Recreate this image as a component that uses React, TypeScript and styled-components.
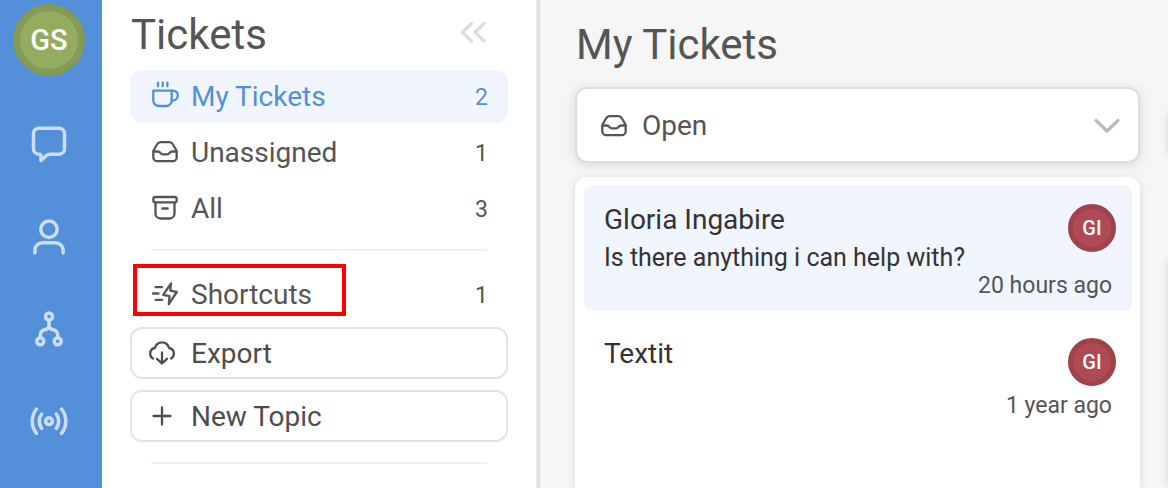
import React from "react";
import styled, { createGlobalStyle } from "styled-components";

const GlobalStyle = createGlobalStyle`
  *, *::before, *::after { box-sizing: border-box; }
  body {
    margin: 0;
    font-family: Roboto, "Liberation Sans", sans-serif;
    color: #555;
    background: #f6f6f6;
  }
  h1, h2, p, ul { margin: 0; padding: 0; font-weight: 400; }
  ul { list-style: none; }
  a { color: inherit; text-decoration: none; }
  button, select { font: inherit; color: inherit; cursor: pointer; }
`;

const Page = styled.div`
  display: flex;
  height: 100vh;
  overflow: hidden;
`;

const Rail = styled.nav`
  flex: 0 0 102px;
  display: flex;
  flex-direction: column;
  align-items: center;
  gap: 52px;
  padding: 4px 4px 0 0;
  background: #5390d9;
  color: #cbdef4;
`;

const RailLink = styled.a`
  display: block;
  width: 40px;
  height: 40px;
`;

const Avatar = styled.div<{ $large?: boolean }>`
  flex: none;
  display: flex;
  align-items: center;
  justify-content: center;
  width: ${(p) => (p.$large ? 72 : 48)}px;
  height: ${(p) => (p.$large ? 72 : 48)}px;
  margin-bottom: ${(p) => (p.$large ? -3 : 0)}px;
  border: ${(p) => (p.$large ? 7 : 5)}px solid ${(p) => (p.$large ? "#849a55" : "#9e424c")};
  border-radius: 50%;
  background: ${(p) => (p.$large ? "#93ac5f" : "#af4954")};
  color: #fff;
  font-size: ${(p) => (p.$large ? 29 : 20)}px;
  font-weight: 500;
`;

const Menu = styled.aside`
  flex: 0 0 438px;
  padding: 10px 28px 0;
  border-right: 2px solid #dfdfdf;
  box-shadow: inset -2px 0 #e9e9e9;
  background: #fff;
`;

const MenuHeader = styled.header`
  display: flex;
  justify-content: space-between;
  align-items: flex-start;
  padding-right: 21px;
  margin-bottom: 10px;
`;

const Title = styled.h1`
  padding-left: 1px;
  font-size: 42px;
  line-height: 50px;
`;

const CollapseButton = styled.button`
  width: 32px;
  height: 32px;
  margin-top: 6px;
  padding: 0;
  border: 0;
  background: none;
  color: #ddd;
`;

const MenuBody = styled.div`
  padding-right: 2px;
`;

const MenuList = styled.ul`
  display: flex;
  flex-direction: column;
  gap: 3px;
`;

const MenuItem = styled.li`
  position: relative;
`;

const MenuLink = styled.a<{ $active?: boolean }>`
  display: flex;
  align-items: center;
  gap: 10px;
  height: 53px;
  padding: 0 20px 0 19px;
  border-radius: 12px;
  background: ${(p) => (p.$active ? "#f0f5fe" : "transparent")};
  color: ${(p) => (p.$active ? "#5390d9" : "#555")};
  font-size: 28px;
`;

const Count = styled.span`
  margin-left: auto;
  padding-top: 2px;
  font-size: 23px;
`;

const Divider = styled.hr`
  height: 2px;
  margin: 14px 21px 17px;
  border: 0;
  background: #f0f0f0;
`;

const Highlight = styled.div`
  position: absolute;
  top: -4px;
  left: 3px;
  width: 213px;
  height: 52px;
  border: 4px solid #f00;
  pointer-events: none;
`;

const Actions = styled.div`
  display: flex;
  flex-direction: column;
  gap: 11px;
  margin: 6px 0 20px;
`;

const ActionButton = styled.button`
  display: flex;
  align-items: center;
  gap: 13px;
  height: 52px;
  padding: 0 14px;
  border: 2px solid #e4e4e4;
  border-radius: 12px;
  background: #fff;
  color: #4d4d4d;
  font-size: 28px;
`;

const Main = styled.main`
  flex: 1;
  min-width: 0;
  display: flex;
  gap: 28px;
  padding-left: 35px;
`;

const TicketColumn = styled.section`
  flex: 1;
  min-width: 0;
  display: flex;
  flex-direction: column;
  padding-top: 20px;
`;

const FilterBox = styled.div`
  position: relative;
  flex: none;
  margin: 17px 0 14px;
`;

const FilterSelect = styled.select`
  appearance: none;
  display: block;
  width: 100%;
  height: 76px;
  padding: 0 65px;
  border: 2px solid #dedede;
  border-radius: 12px;
  background: #fff;
  box-shadow: 0 2px 12px rgba(0, 0, 0, 0.12);
  font-size: 28px;
`;

const FilterIcon = styled.span<{ $end?: boolean }>`
  position: absolute;
  top: ${(p) => (p.$end ? 22 : 24)}px;
  ${(p) => (p.$end ? "right: 17px;" : "left: 23px;")}
  width: 32px;
  height: 32px;
  color: ${(p) => (p.$end ? "#bbb" : "#555")};
  pointer-events: none;
`;

const TicketList = styled.ul`
  flex: 1;
  display: flex;
  flex-direction: column;
  gap: 8px;
  padding: 8px 8px 0 9px;
  border-radius: 12px 12px 0 0;
  background: #fff;
  box-shadow: 0 2px 8px rgba(0, 0, 0, 0.12);
`;

const Ticket = styled.a<{ $active?: boolean }>`
  display: block;
  padding: 19px 16px 11px 20px;
  border-radius: 8px;
  background: ${(p) => (p.$active ? "#f0f5fe" : "transparent")};
`;

const TicketTop = styled.div`
  display: flex;
  justify-content: space-between;
  min-height: 54px;
`;

const TicketName = styled.h2`
  margin-bottom: 8px;
  color: #333;
  font-size: 28px;
  line-height: 32px;
`;

const TicketMessage = styled.p`
  color: #333;
  font-size: 25px;
  line-height: 28px;
`;

const TicketTime = styled.p`
  padding-right: 4px;
  font-size: 23px;
  line-height: 28px;
  text-align: right;
`;

const DetailColumn = styled.section`
  flex: 0 0 240px;
  display: flex;
  flex-direction: column;
  gap: 98px;
  margin-right: -240px;
  padding-top: 106px;
`;

const DetailCard = styled.div<{ $grow?: boolean }>`
  flex: ${(p) => (p.$grow ? "1" : "0 0 50px")};
  border-radius: 12px;
  background: #fff;
  box-shadow: 0 2px 8px rgba(0, 0, 0, 0.14);
`;

const Drawing = styled.svg`
  display: block;
  flex: none;
  fill: none;
  stroke: currentColor;
  stroke-linecap: round;
  stroke-linejoin: round;
`;

type IconProps = { size?: number; weight?: number; children: React.ReactNode };

const Icon = ({ size = 32, weight = 2.3, children }: IconProps) => (
  <Drawing width={size} height={size} viewBox={`0 0 ${size} ${size}`} strokeWidth={weight} aria-hidden="true">
    {children}
  </Drawing>
);

const CupIcon = () => (
  <Icon>
    <path d="M4.3 9.7H22.7V19.5a5.5 5.5 0 0 1-5.5 5.5H9.8a5.5 5.5 0 0 1-5.5-5.500z" />
    <path d="M22.7 9.7h1c3.2 0 5.1 2 5.1 4.900s-2.600 5-6.100 5.200" />
    <path d="M9 1.700v3.600M13.700 1.700v3.600M18.400 1.700v3.600" />
  </Icon>
);

const InboxIcon = () => (
  <Icon>
    <path d="M4.300 15.500c0-1.200.3-2 .8-3l2.900-5c.8-1.500 1.900-2.300 3.700-2.300h8.600c1.800 0 2.900.8 3.700 2.300l2.900 5c.5 1 .8 1.800.8 3v4.700a4 4 0 0 1-4 4H8.300a4 4 0 0 1-4-4z" />
    <path d="M4.500 14.500h4c1.500 0 2.300.6 3 1.500.5.8 1.500 1.300 2.500 1.300h4c1 0 2-.5 2.500-1.300.7-.9 1.500-1.500 3-1.500h4" />
  </Icon>
);

const ArchiveIcon = () => (
  <Icon>
    <rect x="4.300" y="4" width="23.400" height="5.400" rx="2.200" />
    <path d="M6.500 9.500v11a5 5 0 0 0 5 5h9a5 5 0 0 0 5-5v-11M13.300 15.500h5.400" />
  </Icon>
);

const BoltIcon = () => (
  <Icon>
    <path d="M22 4.500L14.200 15.800L20.500 17.200L19.800 25.200L27.800 13L21.300 11.700zM6.500 8.200h6.500M4 14.500h5.500M6.500 20.800h6.700" />
  </Icon>
);

const CloudIcon = () => (
  <Icon>
    <path d="M7 21.500C5.200 20.500 4.200 18.700 4.200 16.700c0-2.800 2-5.200 4.700-5.700C10 7.600 12.700 5.300 16 5.300s6 2.300 7.100 5.700c2.700.5 4.700 2.900 4.700 5.700 0 2-1 3.800-2.800 4.800" />
    <path d="M16 15.500v10.800M11 21.800l5 4.700 5-4.700" />
  </Icon>
);

const PlusIcon = () => (
  <Icon>
    <path d="M7.500 16h17M16 7.500v17" />
  </Icon>
);

const CollapseIcon = () => (
  <Icon weight={3.3}>
    <path d="M14.500 7.500L5.500 16.200l9 8.800M27 7.500L18 16.200l9 8.800" />
  </Icon>
);

const ChevronIcon = () => (
  <Icon weight={3.3}>
    <path d="M5 11.500L16 22l11-10.500" />
  </Icon>
);

const ChatIcon = () => (
  <Icon size={40} weight={3.5}>
    <path d="M10 3.200h20a5.500 5.500 0 0 1 5.500 5.500v15a5.500 5.500 0 0 1-5.500 5.500h-8.500c-2 0-3 .4-4.300 1.500L12 35.500v-4.300c0-1.300-.7-2-2-2a5.500 5.500 0 0 1-5.500-5.500v-15A5.500 5.500 0 0 1 10 3.200z" />
  </Icon>
);

const UserIcon = () => (
  <Icon size={40} weight={3.5}>
    <circle cx="20" cy="12.200" r="8.200" />
    <path d="M5.900 36v-2.700a7.500 7.500 0 0 1 7.500-7.500h13.200a7.500 7.500 0 0 1 7.500 7.500v2.700" />
  </Icon>
);

const FlowIcon = () => (
  <Icon size={40} weight={3.5}>
    <circle cx="20" cy="7.500" r="3.500" />
    <circle cx="11.300" cy="32.200" r="3.500" />
    <circle cx="28.700" cy="32.200" r="3.500" />
    <path d="M20 11.500v6.500M11.300 28.500v-2.500c0-3 1.700-4.700 4.400-5.300 2-.4 3.600-1 4.300-2.700.7 1.700 2.300 2.300 4.300 2.700 2.700.6 4.400 2.300 4.400 5.300v2.500" />
  </Icon>
);

const BroadcastIcon = () => (
  <Icon size={40} weight={3.5}>
    <circle cx="20" cy="20.200" r="3.400" />
    <path d="M12.700 13a12 12 0 0 0 0 14.400M27.300 13a12 12 0 0 1 0 14.400M7.500 8a19.500 19.500 0 0 0 0 24.400M32.500 8a19.500 19.500 0 0 1 0 24.400" />
  </Icon>
);

const railLinks = [
  { label: "Messages", icon: <ChatIcon /> },
  { label: "Contacts", icon: <UserIcon /> },
  { label: "Flows", icon: <FlowIcon /> },
  { label: "Triggers", icon: <BroadcastIcon /> },
];

const folders = [
  { label: "My Tickets", count: 2, icon: <CupIcon />, active: true },
  { label: "Unassigned", count: 1, icon: <InboxIcon /> },
  { label: "All", count: 3, icon: <ArchiveIcon /> },
];

const tickets = [
  { name: "Gloria Ingabire", message: "Is there anything i can help with?", time: "20 hours ago", active: true },
  { name: "Textit", time: "1 year ago" },
];

export default function App() {
  return (
    <>
      <GlobalStyle />
      <Page>
        <Rail>
          <Avatar $large>GS</Avatar>
          {railLinks.map((link) => (
            <RailLink key={link.label} href="#" aria-label={link.label}>
              {link.icon}
            </RailLink>
          ))}
        </Rail>

        <Menu>
          <MenuHeader>
            <Title>Tickets</Title>
            <CollapseButton type="button" aria-label="Collapse menu">
              <CollapseIcon />
            </CollapseButton>
          </MenuHeader>
          <MenuBody>
            <MenuList>
              {folders.map((folder) => (
                <MenuItem key={folder.label}>
                  <MenuLink href="#" $active={folder.active}>
                    {folder.icon}
                    {folder.label}
                    <Count>{folder.count}</Count>
                  </MenuLink>
                </MenuItem>
              ))}
            </MenuList>
            <Divider />
            <MenuList>
              <MenuItem>
                <MenuLink href="#">
                  <BoltIcon />
                  Shortcuts
                  <Count>1</Count>
                </MenuLink>
                <Highlight />
              </MenuItem>
            </MenuList>
            <Actions>
              <ActionButton type="button">
                <CloudIcon />
                Export
              </ActionButton>
              <ActionButton type="button">
                <PlusIcon />
                New Topic
              </ActionButton>
            </Actions>
            <Divider />
          </MenuBody>
        </Menu>

        <Main>
          <TicketColumn>
            <Title>My Tickets</Title>
            <FilterBox>
              <FilterSelect aria-label="Ticket status" defaultValue="open">
                <option value="open">Open</option>
                <option value="closed">Closed</option>
              </FilterSelect>
              <FilterIcon>
                <InboxIcon />
              </FilterIcon>
              <FilterIcon $end>
                <ChevronIcon />
              </FilterIcon>
            </FilterBox>
            <TicketList>
              {tickets.map((ticket) => (
                <li key={ticket.name}>
                  <Ticket href="#" $active={ticket.active}>
                    <TicketTop>
                      <div>
                        <TicketName>{ticket.name}</TicketName>
                        {ticket.message && <TicketMessage>{ticket.message}</TicketMessage>}
                      </div>
                      <Avatar>GI</Avatar>
                    </TicketTop>
                    <TicketTime>{ticket.time}</TicketTime>
                  </Ticket>
                </li>
              ))}
            </TicketList>
          </TicketColumn>
          <DetailColumn aria-label="Ticket details">
            <DetailCard />
            <DetailCard $grow />
          </DetailColumn>
        </Main>
      </Page>
    </>
  );
}
